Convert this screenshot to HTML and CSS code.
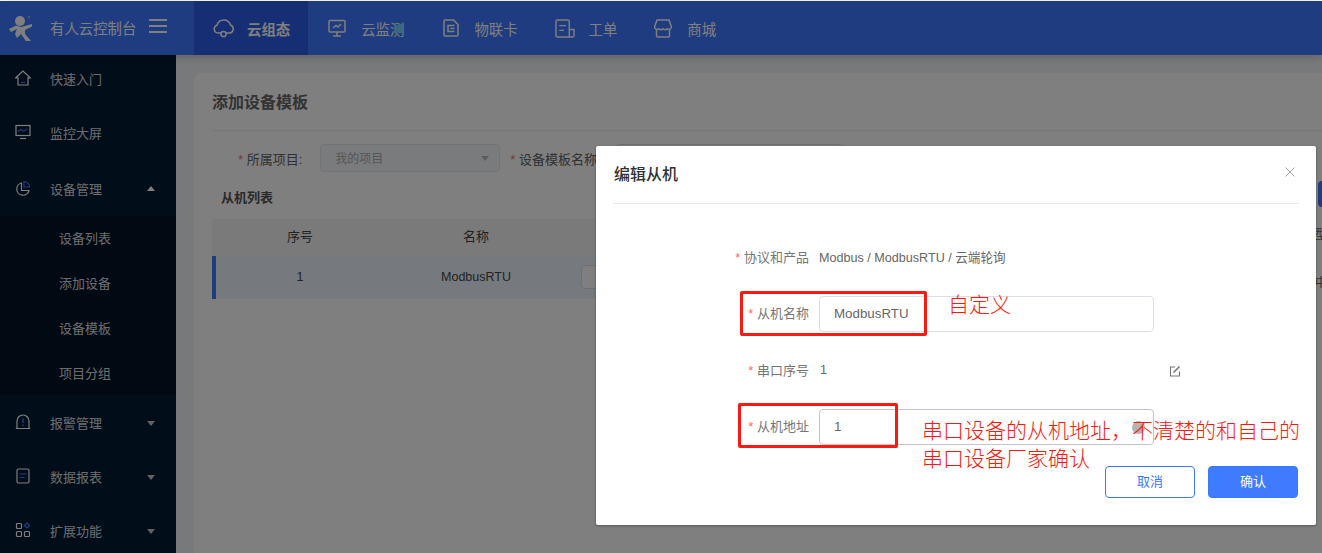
FILE: index.html
```html
<!DOCTYPE html>
<html lang="zh-CN">
<head>
    <meta charset="UTF-8">
    <title>有人云控制台</title>
    <link rel="stylesheet" href="styles.css">
</head>
<body>
    <div class="app">
        <header class="topbar">
            <div class="brand">
                <svg class="logo" viewBox="0 0 26 28" width="26" height="28">
                    <circle cx="12" cy="7" r="5" fill="#fff"/>
                    <circle cx="21" cy="3" r="1.500" fill="#8fa8e0"/>
                    <path d="M1 15l7-3.500 5 1.500 11-3v2.500l-7 3.500v4l6 7h-5l-5-7-4 4-2-4 2-5-6 3z" fill="#fff"/>
                </svg>
                <span class="brand-name">有人云控制台</span>
                <svg class="burger" viewBox="0 0 18 14" width="18" height="14"><path d="M0 1h18M0 7h18M0 13h18" stroke="#fff" stroke-width="2"/></svg>
            </div>
            <nav class="nav">
                <a class="nav-item active">
                    <svg viewBox="0 0 22 20" width="22" height="20" fill="none" stroke="#fff" stroke-width="1.500"><path d="M6 15H5a4 4 0 0 1-1-7.800A7 7 0 0 1 17.500 7 4.200 4.200 0 0 1 17 15h-2"/><circle cx="10.500" cy="16" r="2.600"/><path d="M6 15h2M13 15h2"/></svg>
                    <span>云组态</span>
                </a>
                <a class="nav-item">
                    <svg viewBox="0 0 18 18" width="18" height="18" fill="none" stroke="#fff" stroke-width="1.500"><rect x="1" y="1.500" width="16" height="11.500" rx="1"/><path d="M9 13v3.500M5 17h8M5 9l3-2.500 2 1.500 3-3"/></svg>
                    <span>云监测</span>
                </a>
                <a class="nav-item nav-short">
                    <svg viewBox="0 0 16 18" width="16" height="18" fill="none" stroke="#fff" stroke-width="1.500"><path d="M2 1h8.500L15 5.500V16a1 1 0 0 1-1 1H2a1 1 0 0 1-1-1V2a1 1 0 0 1 1-1z"/><path d="M11.500 6.500H5v6h6.500M7.500 9.500h4"/></svg>
                    <span>物联卡</span>
                </a>
                <a class="nav-item nav-short nav-tight">
                    <svg viewBox="0 0 21 20" width="20" height="19" fill="none" stroke="#fff" stroke-width="1.500"><path d="M15 19H2.500a1.500 1.500 0 0 1-1.500-1.500V2.500A1.500 1.500 0 0 1 2.500 1H13.500A1.500 1.500 0 0 1 15 2.500V19h3.500a1.500 1.500 0 0 0 1.500-1.500V11h-5"/><path d="M4.500 7h7M4.500 12h5"/></svg>
                    <span>工单</span>
                </a>
                <a class="nav-item">
                    <svg viewBox="0 0 18 19" width="18" height="19" fill="none" stroke="#fff" stroke-width="1.500"><path d="M3 1h12l2.300 6.500a2.500 2.500 0 0 1-4.100 2.300 3 3 0 0 1-4.200 0 3 3 0 0 1-4.200 0 2.500 2.500 0 0 1-4.100-2.300z"/><path d="M2.500 11v6a1 1 0 0 0 1 1h11a1 1 0 0 0 1-1v-6"/></svg>
                    <span>商城</span>
                </a>
            </nav>
        </header>

        <div class="layout">
            <aside class="sidebar">
                <div class="menu-item item-quick">
                    <svg viewBox="0 0 16 16" width="16" height="16" fill="none" stroke="#fff" stroke-width="1.200"><path d="M.8 7.800L8 1l7.200 6.800H13V15H3V7.800z"/><path d="M6 12.500h4" stroke="#3c78ff"/></svg>
                    <span>快速入门</span>
                </div>
                <div class="menu-item item-screen">
                    <svg viewBox="0 0 16 16" width="16" height="16" fill="none" stroke="#fff" stroke-width="1.200"><rect x="1" y="1.500" width="14" height="10"/><path d="M3 7.500l2.500-2 3 1.500 4-2" stroke="#3c78ff"/><path d="M5 14.500h6"/></svg>
                    <span>监控大屏</span>
                </div>
                <div class="menu-item item-device">
                    <svg viewBox="0 0 16 16" width="16" height="16" fill="none" stroke="#fff" stroke-width="1.200"><path d="M6.500 3A6.200 6.200 0 1 0 14 10.500H6.500z"/><path d="M9 1.500a5.500 5.500 0 0 1 5.500 5.500H9z" stroke="#3c78ff"/></svg>
                    <span>设备管理</span>
                    <i class="caret up"></i>
                </div>
                <div class="submenu">
                    <div class="sub-item">设备列表</div>
                    <div class="sub-item">添加设备</div>
                    <div class="sub-item">设备模板</div>
                    <div class="sub-item">项目分组</div>
                </div>
                <div class="menu-item">
                    <svg viewBox="0 0 16 16" width="16" height="16" fill="none" stroke="#fff" stroke-width="1.200"><path d="M2 14.500V7a6 6 0 0 1 12 0v7.500zM.8 14.500h14.400"/><path d="M8 4.500v4.500M8 10.500v1.500" stroke="#3c78ff" stroke-width="1.500"/></svg>
                    <span>报警管理</span>
                    <i class="caret"></i>
                </div>
                <div class="menu-item">
                    <svg viewBox="0 0 16 16" width="16" height="16" fill="none" stroke="#fff" stroke-width="1.200"><rect x="2" y="1" width="12" height="14" rx="1.500"/><path d="M4.500 6h7M4.500 9.500h5" stroke="#3c78ff"/></svg>
                    <span>数据报表</span>
                    <i class="caret"></i>
                </div>
                <div class="menu-item">
                    <svg viewBox="0 0 16 16" width="16" height="16" fill="none" stroke="#fff" stroke-width="1.200"><rect x="1.500" y="1.500" width="5" height="5" rx="1"/><rect x="1.500" y="9.500" width="5" height="5" rx="1"/><rect x="9.500" y="9.500" width="5" height="5" rx="1"/><path d="M12 1l2.600 2.500L12 6 9.400 3.500z" stroke="#3c78ff"/></svg>
                    <span>扩展功能</span>
                    <i class="caret"></i>
                </div>
            </aside>

            <main class="main">
                <section class="card">
                    <h2 class="card-title">添加设备模板</h2>
                    <div class="filter-row">
                        <label class="filter-label first"><em>*</em> 所属项目:</label>
                        <div class="select">我的项目<i class="caret gray"></i></div>
                        <label class="filter-label"><em>*</em> 设备模板名称</label>
                        <div class="text-box"></div>
                    </div>
                    <div class="panels">
                        <div class="panel-left">
                            <h3 class="list-title">从机列表</h3>
                            <div class="table-head">
                                <span>序号</span>
                                <span>名称</span>
                            </div>
                            <div class="table-row">
                                <span>1</span>
                                <span>ModbusRTU</span>
                                <span class="row-input"></span>
                            </div>
                        </div>
                        <div class="panel-right">
                            <div class="add-btn"></div>
                            <div class="cut-text head">型</div>
                            <div class="cut-text">中</div>
                        </div>
                    </div>
                </section>
            </main>
        </div>

        <div class="mask"></div>

        <div class="dialog">
            <div class="dialog-head">
                <span>编辑从机</span>
                <svg viewBox="0 0 10 10" width="10" height="10"><path d="M.5.5l9 9M9.500.5l-9 9" stroke="#a8abb2" stroke-width="1"/></svg>
            </div>
            <div class="dialog-body">
                <div class="form-row info">
                    <label><em>*</em> 协议和产品</label>
                    <span class="value">Modbus / ModbusRTU / 云端轮询</span>
                </div>
                <div class="form-row">
                    <label><em>*</em> 从机名称</label>
                    <div class="input">ModbusRTU</div>
                </div>
                <div class="form-row info">
                    <label><em>*</em> 串口序号</label>
                    <span class="value port">1</span>
                    <svg class="edit" viewBox="0 0 12 12" width="12" height="12" fill="none" stroke="#777" stroke-width="1.100"><path d="M6 2H1.500v9h9V6.500"/><path d="M4.500 7.500L10.500 1.500" stroke-width="1.600"/></svg>
                </div>
                <div class="form-row">
                    <label><em>*</em> 从机地址</label>
                    <div class="input focus">1<i class="clear"></i></div>
                </div>
            </div>
            <div class="dialog-foot">
                <button class="btn">取消</button>
                <button class="btn primary">确认</button>
            </div>
        </div>

        <!-- red notes drawn on top of the screenshot -->
        <div class="mark mark-name"></div>
        <div class="mark mark-addr"></div>
        <div class="note note-name">自定义</div>
        <div class="note note-addr">串口设备的从机地址，不清楚的和自己的<br>串口设备厂家确认</div>
    </div>
</body>
</html>
```

FILE: styles.css
```css
* {
    box-sizing: border-box;
}
html, body {
    margin: 0;
    padding: 0;
    height: 100%;
    overflow: hidden;
}
body {
    font-family: "Liberation Sans", "Noto Sans CJK SC", sans-serif;
    font-size: 13px;
    color: #333;
    background: #fff;
}
em {
    font-style: normal;
    color: #f56c6c;
}
.app {
    position: relative;
    height: 553px;
    padding-top: 1px;
    overflow: hidden;
}

/* top bar */
.topbar {
    display: flex;
    height: 54px;
    background: #3c78ff;
    color: #fff;
    position: relative;
    box-shadow: 0 2px 8px rgba(0,0,0,0.2);
}
.brand {
    display: flex;
    align-items: center;
    width: 194px;
    padding-left: 8px;
    flex-shrink: 0;
}
.logo {
    flex-shrink: 0;
}
.brand-name {
    font-size: 14.400px;
    margin-left: 16px;
    width: 86px;
    margin-top: -1px;
    white-space: nowrap;
}
.burger {
    margin-left: 13px;
    margin-top: -4px;
}
.nav {
    display: flex;
}
.nav-item {
    display: flex;
    align-items: center;
    gap: 15px;
    padding: 0 19px 0 20px;
    font-size: 14.400px;
    white-space: nowrap;
}
.nav-item.active {
    background: #2c5ee8;
    font-weight: bold;
    gap: 12px;
    padding: 0 18px 0 19px;
}
.nav-item.nav-short {
    padding-right: 17px;
}
.nav-item.nav-tight {
    gap: 14px;
}

/* side menu */
.layout {
    display: flex;
    height: 498px;
}
.sidebar {
    width: 176px;
    flex-shrink: 0;
    background: #041a34;
    color: #d8dade;
}
.menu-item {
    display: flex;
    align-items: center;
    height: 54px;
    padding: 0 21px 0 15px;
    gap: 19px;
}
.menu-item.item-quick {
    height: 50px;
    padding-bottom: 4px;
}
.menu-item.item-screen {
    height: 56px;
    padding-bottom: 2px;
}
.menu-item.item-device {
    height: 55px;
    padding-bottom: 1px;
}
.menu-item span {
    flex: 1;
}
.caret {
    width: 0;
    height: 0;
    margin-top: 3px;
    border-left: 4.500px solid transparent;
    border-right: 4.500px solid transparent;
    border-top: 5px solid #c0c4cc;
}
.caret.up {
    margin-top: 1px;
    border-top: 0;
    border-bottom: 5px solid #fff;
}
.caret.gray {
    margin-top: 0;
    border-top-color: #b4b8bf;
}
.submenu {
    background: #021327;
}
.sub-item {
    height: 45px;
    line-height: 45px;
    padding-left: 59px;
}
.sub-item:last-child {
    height: 44px;
}

/* page behind the dialog */
.main {
    flex: 1;
    min-width: 0;
    padding: 18px 0 0 18px;
    background: #f0f2f5;
}
.card {
    height: 100%;
    width: 1200px;
    padding: 0 18px;
    background: #fff;
    border-radius: 8px 8px 0 0;
}
.card-title {
    margin: 0;
    height: 58px;
    line-height: 60px;
    font-size: 16px;
    font-weight: bold;
    color: #666;
    border-bottom: 1px solid #ebeef5;
}
.filter-row {
    display: flex;
    align-items: center;
    height: 28px;
    margin-top: 13px;
}
.filter-label {
    color: #606266;
    white-space: nowrap;
}
.filter-label.first {
    margin-left: 26px;
    margin-right: 18px;
}
.select {
    position: relative;
    width: 180px;
    height: 28px;
    line-height: 29px;
    padding-left: 14px;
    margin-right: 10px;
    font-size: 12px;
    color: #a8abb2;
    background: #f5f7fa;
    border: 1px solid #e4e7ed;
    border-radius: 4px;
}
.select .caret {
    position: absolute;
    right: 10px;
    top: 11px;
}
.text-box {
    width: 226px;
    height: 28px;
    margin-left: 19px;
    border: 1px solid #dcdfe6;
    border-radius: 4px;
}
.panels {
    display: flex;
    gap: 9px;
}
.panel-left {
    width: 511px;
    height: 340px;
    flex-shrink: 0;
    background: #fff;
}
.panel-right {
    flex: 1;
    height: 340px;
    background: #fff;
    color: #666;
    font-size: 12px;
}
.list-title {
    margin: 0;
    height: 47px;
    padding: 15px 0 0 9px;
    font-size: 13px;
    line-height: 22px;
    color: #555;
}
.table-head,
.table-row {
    display: grid;
    align-items: center;
    text-align: center;
    color: #444;
}
.table-head {
    grid-template-columns: 176px 176px 1fr;
    height: 37px;
    padding-bottom: 4px;
    background: #f5f5f5;
}
.table-row {
    grid-template-columns: 168px 184px 1fr;
    height: 43px;
    padding-bottom: 2px;
    background: #ecf5ff;
    border-left: 4px solid #3c78ff;
    font-size: 12.500px;
}
.row-input {
    width: 80px;
    height: 24px;
    margin-left: 13px;
    background: #fff;
    border: 1px solid #dcdfe6;
    border-radius: 4px;
}
.add-btn {
    width: 30px;
    height: 26px;
    margin: 9px 0 0 586px;
    background: #3c78ff;
    border-radius: 4px;
}
.cut-text {
    margin: 34px 0 0 583px;
    height: 14px;
    line-height: 14px;
}
.cut-text.head {
    margin-top: 21px;
}

/* modal */
.mask {
    position: absolute;
    inset: 1px 0 0 0;
    background: rgba(0,0,0,0.5);
}
.dialog {
    position: absolute;
    left: 596px;
    top: 146px;
    width: 720px;
    height: 379px;
    padding: 0 18px;
    background: #fff;
    border-radius: 2px;
    box-shadow: 0 1px 3px rgba(0,0,0,0.3);
}
.dialog-head {
    display: flex;
    align-items: center;
    justify-content: space-between;
    height: 58px;
    padding: 0 3px 4px 0;
    font-size: 16px;
    font-weight: 500;
    color: #303133;
    border-bottom: 1px solid #e4e7ed;
}
.dialog-head svg {
    margin-bottom: 2px;
}
.dialog-body {
    display: flex;
    flex-direction: column;
    gap: 20px;
    padding-top: 35px;
}
.form-row {
    display: flex;
    align-items: center;
    height: 36px;
}
.form-row.info {
    height: 37px;
}
.form-row label {
    width: 195px;
    margin-right: 10px;
    margin-bottom: 3px;
    text-align: right;
    color: #777;
    white-space: nowrap;
}
.form-row.info label {
    margin-bottom: 2px;
}
.value {
    width: 335px;
    margin-bottom: 2px;
    font-size: 12.600px;
    color: #666;
}
.value.port {
    margin-bottom: 1px;
    padding-left: 1px;
}
.edit {
    margin-left: 15px;
}
.input {
    position: relative;
    width: 335px;
    height: 36px;
    line-height: 34px;
    padding-left: 14px;
    font-size: 13.330px;
    color: #666;
    border: 1px solid #dcdfe6;
    border-radius: 4px;
}
.input.focus {
    border-color: #c0c4cc;
}
.clear {
    position: absolute;
    right: 8px;
    top: 11px;
    width: 13px;
    height: 13px;
    border-radius: 50%;
    background: #b4b4b4;
}
.dialog-foot {
    display: flex;
    justify-content: flex-end;
    gap: 13px;
    margin-top: 21px;
}
.btn {
    width: 90px;
    height: 32px;
    padding: 0 0 3px;
    font-family: inherit;
    font-size: 13px;
    color: #3c78ff;
    background: #fff;
    border: 1px solid #3c78ff;
    border-radius: 4px;
}
.btn.primary {
    color: #fff;
    background: #3f7bff;
}

/* annotations */
.mark {
    position: absolute;
    border: 3px solid #fb1a0f;
    border-radius: 2px;
}
.mark-name {
    left: 740px;
    top: 291px;
    width: 187px;
    height: 45px;
}
.mark-addr {
    left: 738px;
    top: 403px;
    width: 160px;
    height: 45px;
}
.note {
    position: absolute;
    font-family: "Noto Sans CJK SC", sans-serif;
    font-size: 21px;
    line-height: 28px;
    font-weight: 300;
    color: #fb1a0f;
    white-space: nowrap;
}
.note-name {
    left: 948px;
    top: 289px;
}
.note-addr {
    left: 922px;
    top: 415px;
}
```
